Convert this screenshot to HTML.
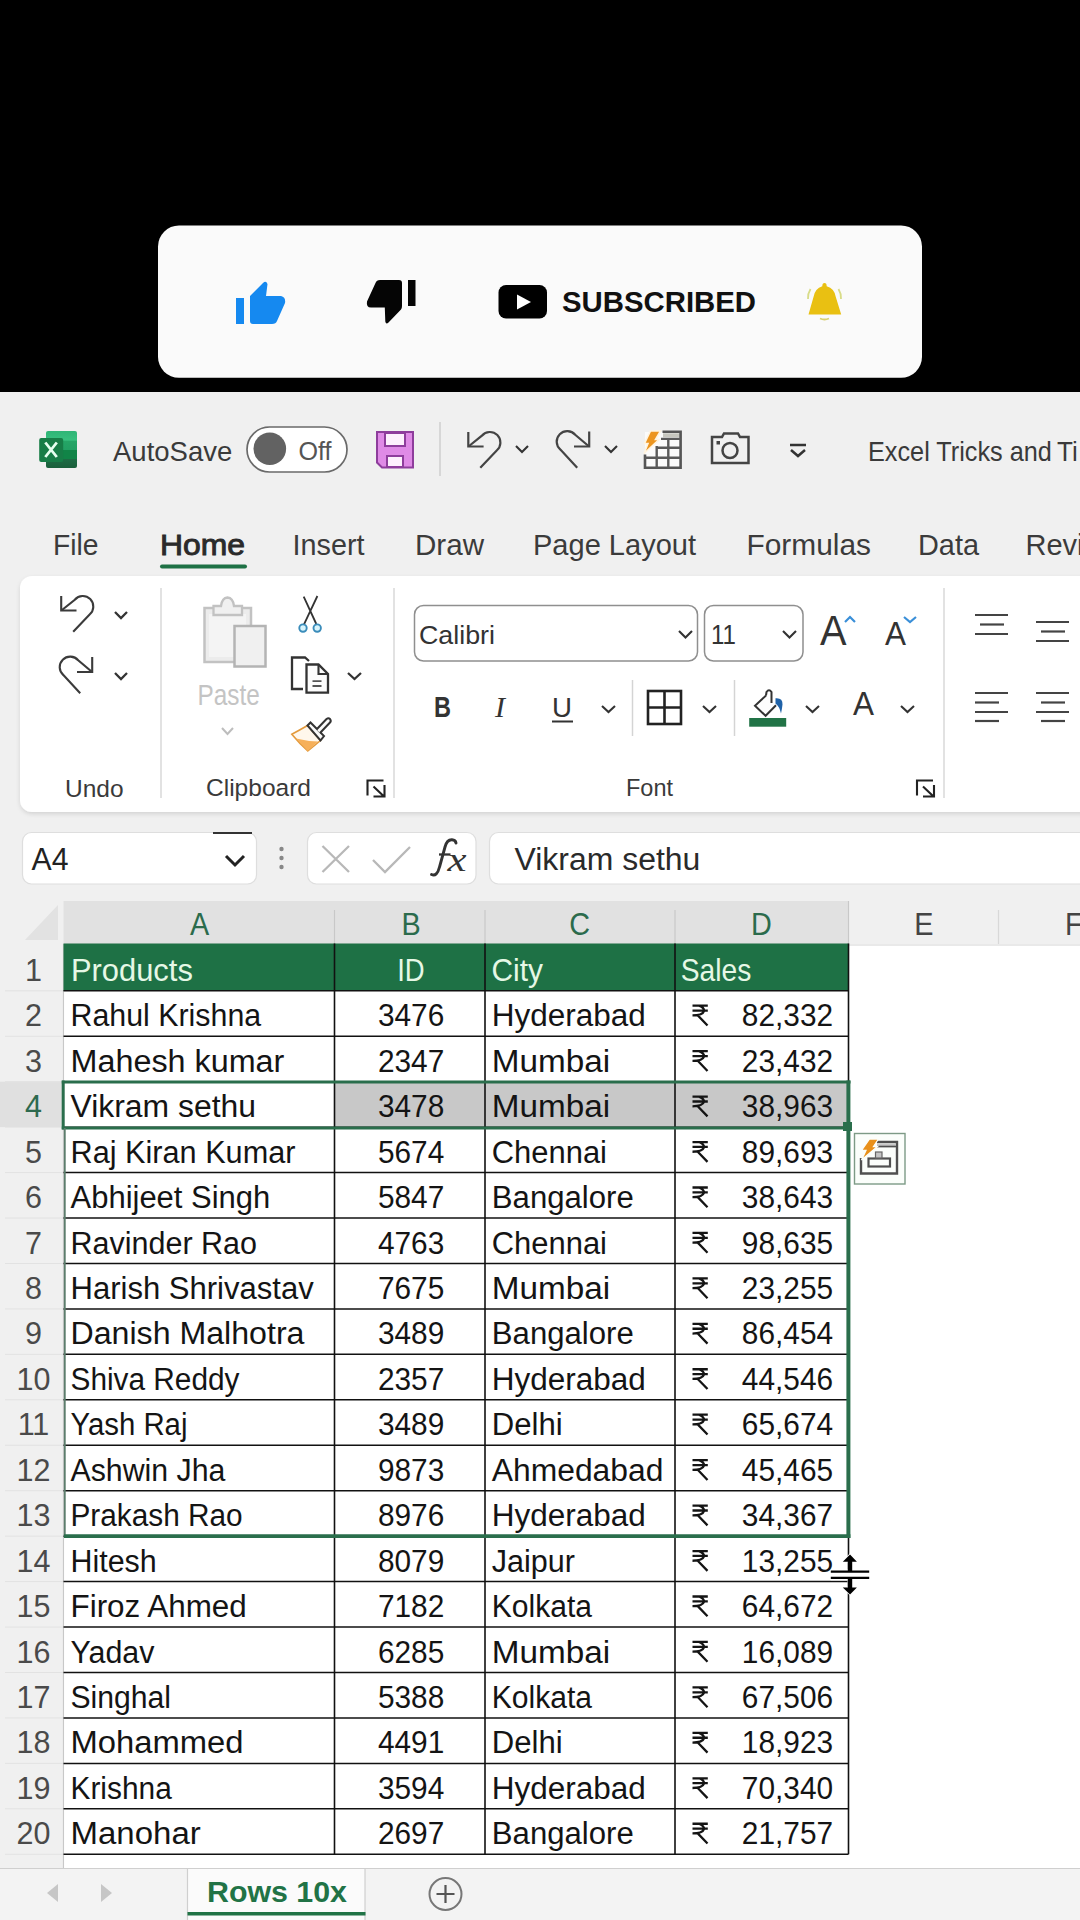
<!DOCTYPE html>
<html><head><meta charset="utf-8"><title>Excel</title>
<style>
html,body{margin:0;padding:0;width:1080px;height:1920px;overflow:hidden;background:#000;}
svg{position:absolute;left:0;top:0;display:block;}
text{font-family:"Liberation Sans", sans-serif;white-space:pre;}
</style></head><body>
<svg width="1080" height="1920" viewBox="0 0 1080 1920">
<rect x="0" y="0" width="1080" height="392" fill="#000"/>
<rect x="158" y="225.5" width="764" height="152.3" fill="#fafafa" rx="21"/>
<rect x="236" y="298" width="8" height="26" fill="#1589f0"/>
<path d="M250,296 L263,283 Q266,280 267.5,284 L266,296 L281,296 Q286,297 285,303 L277,321 Q276,324 272,324 L253,324 Q250,324 250,321 Z" fill="#1589f0" stroke="none" stroke-width="1"/>
<rect x="408" y="280" width="7.5" height="26" fill="#050505"/>
<path d="M402,283 Q402,280 399,280 L380,280 Q376.5,280 375.5,283 L367,301.5 Q366,307.5 371,307.5 L384.8,307.5 L385.3,321.5 Q386,325 388.5,322.5 L401,309.5 Q402,308.5 402,306 Z" fill="#050505" stroke="none" stroke-width="1"/>
<rect x="498.5" y="285" width="48.5" height="33.5" fill="#000" rx="7.5"/>
<path d="M517,294.5 L531,302 L517,309.5 Z" fill="#fff" stroke="none" stroke-width="1"/>
<text x="562" y="312" font-size="29" fill="#111" font-weight="bold" textLength="194" lengthAdjust="spacingAndGlyphs">SUBSCRIBED</text>
<path d="M824.5,283 Q826.7,283 826.7,286.3 Q834.5,288.5 835.8,297 L841.2,314.5 L808.5,314.5 L813.5,297 Q815,288.5 822.3,286.3 Q822.3,283 824.5,283 Z" fill="#e9c012" stroke="none" stroke-width="1"/>
<path d="M820,318.5 Q824.5,320.5 829,318.5" fill="none" stroke="#d9d070" stroke-width="1.8"/>
<path d="M810.5,289 Q807.5,294 808,299" fill="none" stroke="#d8dc88" stroke-width="1.8"/>
<path d="M838.5,289 Q841.5,294 841,299" fill="none" stroke="#d8dc88" stroke-width="1.8"/>
<rect x="0" y="392" width="1080" height="1528" fill="#f0f0f0"/>
<defs><linearGradient id="xg" x1="0" y1="0" x2="0" y2="1"><stop offset="0" stop-color="#2fb576"/><stop offset="0.25" stop-color="#38c07f"/><stop offset="0.27" stop-color="#25a566"/><stop offset="0.5" stop-color="#22a063"/><stop offset="0.52" stop-color="#118447"/><stop offset="0.75" stop-color="#118447"/><stop offset="0.77" stop-color="#1d6b44"/><stop offset="1" stop-color="#1a5f3b"/></linearGradient><filter id="sh" x="-5%" y="-5%" width="110%" height="120%"><feDropShadow dx="0" dy="2" stdDeviation="2" flood-color="#000" flood-opacity="0.12"/></filter></defs>
<rect x="46" y="431" width="31" height="37" fill="url(#xg)" rx="2"/>
<rect x="39.2" y="438" width="24" height="24" fill="#177d47" rx="2"/>
<path d="M45.3,442.5 L56.8,457 M56.8,442.5 L45.3,457" fill="none" stroke="#e6fff0" stroke-width="2.8"/>
<text x="113.00" y="461.00" font-size="27.5" fill="#3a3a3a" textLength="119.27" lengthAdjust="spacingAndGlyphs">AutoSave</text>
<rect x="247" y="427" width="100" height="45" fill="#ffffff" rx="22.5" stroke="#6a6a6a" stroke-width="1.7"/>
<circle cx="269.8" cy="448.8" r="16.3" fill="#626262"/>
<text x="298.50" y="459.50" font-size="25.5" fill="#555" textLength="33.04" lengthAdjust="spacingAndGlyphs">Off</text>
<path d="M377,432 L413,432 L413,467.5 L382,467.5 L377,462.5 Z" fill="#df8ae6" stroke="#8e3d9c" stroke-width="2"/>
<rect x="385" y="433" width="20" height="13" fill="#fdf0fd" stroke="#8e3d9c" stroke-width="2"/>
<rect x="387" y="456" width="16" height="11" fill="#fdf0fd" stroke="#8e3d9c" stroke-width="2"/>
<line x1="440" y1="422" x2="440" y2="476" stroke="#cfcfcf" stroke-width="1.5"/>
<g transform="translate(407.1,-164)">
<path d="M61.2,596 L61.2,610.5 L76.5,610.5" fill="none" stroke="#444" stroke-width="2.2"/>
<path d="M62,610 L74.8,599.7 A10.5,10.5 0 1 1 89.6,614.5 L73.2,631.8" fill="none" stroke="#444" stroke-width="2.2"/>
</g>
<path d="M516,446 L522,452 L528,446" fill="none" stroke="#333" stroke-width="2.1"/>
<g transform="translate(497,-225.5)">
<path d="M92.2,657 L92.2,672 L77,672" fill="none" stroke="#444" stroke-width="2.2"/>
<path d="M91.5,671.5 L78.2,660.3 A10.5,10.5 0 1 0 63.4,675.1 L80.2,693.3" fill="none" stroke="#444" stroke-width="2.2"/>
</g>
<path d="M605,446 L611,452 L617,446" fill="none" stroke="#333" stroke-width="2.1"/>
<rect x="645" y="432" width="36" height="36" fill="#fbfbfb"/>
<rect x="663" y="433.3" width="17" height="4" fill="#c6c6be"/>
<path d="M662.5,431.8 L680.6,431.8 L680.6,467.8 L645,467.8 L645,454.5" fill="none" stroke="#555" stroke-width="2.6"/>
<path d="M661,438.9 L680.6,438.9 M656,447.8 L680.6,447.8 M645,457.8 L680.6,457.8 M656.7,446 L656.7,467.8 M668.3,438.9 L668.3,467.8" fill="none" stroke="#5a5a5a" stroke-width="2.4"/>
<path d="M650.5,431 L660.5,431 L655.5,439.5 L659,439.5 L644,453.5 L648,443.5 L644.5,443.5 Z" fill="#ec9520" stroke="#fff4e0" stroke-width="1.6"/>
<path d="M712,437 L722,437 L724,433.5 L738,433.5 L740,437 L748.5,437 L748.5,463 L712,463 Z" fill="none" stroke="#444" stroke-width="2.5"/>
<circle cx="730" cy="450.5" r="7.5" fill="none" stroke="#444" stroke-width="2.5"/>
<rect x="716.5" y="441" width="3.5" height="3.5" fill="#444"/>
<line x1="790" y1="445" x2="806" y2="445" stroke="#333" stroke-width="2.5"/>
<path d="M791,450 L798,456 L805,450" fill="none" stroke="#333" stroke-width="2.5"/>
<text x="868.00" y="461.00" font-size="28" fill="#3a3a3a" textLength="183.90" lengthAdjust="spacingAndGlyphs">Excel Tricks and</text>
<text x="1057.00" y="461.00" font-size="28" fill="#3a3a3a" textLength="20.74" lengthAdjust="spacingAndGlyphs">Ti</text>
<text x="53" y="555" font-size="29" fill="#3b3b3b" textLength="45.5" lengthAdjust="spacingAndGlyphs">File</text>
<text x="292.5" y="555" font-size="29" fill="#3b3b3b" textLength="72" lengthAdjust="spacingAndGlyphs">Insert</text>
<text x="415" y="555" font-size="29" fill="#3b3b3b" textLength="69" lengthAdjust="spacingAndGlyphs">Draw</text>
<text x="533" y="555" font-size="29" fill="#3b3b3b" textLength="163" lengthAdjust="spacingAndGlyphs">Page Layout</text>
<text x="746.5" y="555" font-size="29" fill="#3b3b3b" textLength="124.5" lengthAdjust="spacingAndGlyphs">Formulas</text>
<text x="918" y="555" font-size="29" fill="#3b3b3b" textLength="61" lengthAdjust="spacingAndGlyphs">Data</text>
<text x="1025.5" y="555" font-size="29" fill="#3b3b3b">Review</text>
<text x="160" y="555" font-size="29" fill="#2a2a2a" textLength="85" lengthAdjust="spacingAndGlyphs" stroke="#2a2a2a" stroke-width="0.9">Home</text>
<rect x="160" y="564.5" width="87" height="4" fill="#1e7145" rx="2"/>
<rect x="20" y="576" width="1100" height="236" fill="#ffffff" rx="12" filter="url(#sh)"/>
<line x1="161" y1="588" x2="161" y2="798" stroke="#d9d9d9" stroke-width="1.5"/>
<line x1="394" y1="588" x2="394" y2="798" stroke="#d9d9d9" stroke-width="1.5"/>
<line x1="944" y1="588" x2="944" y2="798" stroke="#d9d9d9" stroke-width="1.5"/>
<path d="M61.2,596 L61.2,610.5 L76.5,610.5" fill="none" stroke="#3b3b3b" stroke-width="2.1"/>
<path d="M62,610 L74.8,599.7 A10.5,10.5 0 1 1 89.6,614.5 L73.2,631.8" fill="none" stroke="#3b3b3b" stroke-width="2.1"/>
<path d="M115,612 L121,618 L127,612" fill="none" stroke="#333" stroke-width="2.3"/>
<path d="M92.2,657 L92.2,672 L77,672" fill="none" stroke="#3b3b3b" stroke-width="2.1"/>
<path d="M91.5,671.5 L78.2,660.3 A10.5,10.5 0 1 0 63.4,675.1 L80.2,693.3" fill="none" stroke="#3b3b3b" stroke-width="2.1"/>
<path d="M115,673 L121,679 L127,673" fill="none" stroke="#333" stroke-width="2.3"/>
<text x="65" y="797" font-size="24.5" fill="#3a3a3a">Undo</text>
<path d="M204.5,608 L251,608 L251,662 L204.5,662 Z" fill="#ececec" stroke="#c2c2c2" stroke-width="2.5"/>
<rect x="209" y="614" width="37" height="43" fill="#f4f4f4"/>
<path d="M213.5,615 L213.5,606 L221,606 Q222,598 227.5,597.5 Q233,598 234,606 L242,606 L242,615 Z" fill="#f0f0f0" stroke="#c2c2c2" stroke-width="2.3"/>
<rect x="234.5" y="626" width="31" height="40.5" fill="#f0f0f0" stroke="#b4b4b4" stroke-width="2.5"/>
<text x="197.50" y="705.00" font-size="30" fill="#c4c4c4" textLength="62.27" lengthAdjust="spacingAndGlyphs">Paste</text>
<path d="M222,728 L227.5,734 L233,728" fill="none" stroke="#bdbdbd" stroke-width="2"/>
<path d="M303.7,596.7 L316.3,624 M317.4,596 L304,624.3" fill="none" stroke="#333" stroke-width="1.8"/>
<circle cx="303" cy="628.1" r="3.7" fill="#d8f4fc" stroke="#3a8cba" stroke-width="1.9"/>
<circle cx="317.2" cy="628.1" r="3.7" fill="#d8f4fc" stroke="#3a8cba" stroke-width="1.9"/>
<path d="M303,689 L292,689 L292,657.5 L305,657.5 L309,661" fill="none" stroke="#333" stroke-width="2.3"/>
<path d="M306.5,664.5 L318.5,664.5 L328,674 L328,692.7 L306.5,692.7 Z" fill="#fcfcfc" stroke="#333" stroke-width="2.3"/>
<path d="M318.5,664.5 L318.5,674 L328,674" fill="none" stroke="#333" stroke-width="2.1"/>
<path d="M312.5,681.2 L321.5,681.2 M312.5,686 L321.5,686" fill="none" stroke="#555" stroke-width="1.8"/>
<path d="M348,673 L354.5,679 L361,673" fill="none" stroke="#333" stroke-width="2.3"/>
<path d="M307.5,725.5 Q298,731 291.8,734.2 Q300,744 307.8,751 Q314,746 320.5,740.5 Z" fill="#fff7ec" stroke="#e39a3c" stroke-width="1.6"/>
<path d="M296,738.5 Q306,741 318,741.5 L307.8,751 Z" fill="#f6b05a" stroke="none" stroke-width="1"/>
<path d="M307.5,725.5 L310.5,722.5 L324,736 L320.5,740.5 Z" fill="#fafafa" stroke="#333" stroke-width="2"/>
<path d="M316.5,729.5 L326.5,719 Q328.5,717.5 330,719 Q331.5,721 330,722.5 L320,733" fill="#fafafa" stroke="#333" stroke-width="2"/>
<text x="206" y="796" font-size="24.5" fill="#3a3a3a" textLength="105" lengthAdjust="spacingAndGlyphs">Clipboard</text>
<path d="M383.5,780.5 L367.5,780.5 L367.5,795.5" fill="none" stroke="#222" stroke-width="2.1"/>
<path d="M373.5,786.5 L383.5,796.0 M373.5,796.5 L384.5,796.5 L384.5,785.0" fill="none" stroke="#222" stroke-width="2.1"/>
<path d="M933,780.5 L917,780.5 L917,795.5" fill="none" stroke="#222" stroke-width="2.1"/>
<path d="M923,786.5 L933,796.0 M923,796.5 L934,796.5 L934,785.0" fill="none" stroke="#222" stroke-width="2.1"/>
<rect x="414.5" y="605.5" width="283" height="55.5" fill="#fff" rx="9" stroke="#8f8f8f" stroke-width="1.5"/>
<text x="419" y="644" font-size="26.7" fill="#333" textLength="76" lengthAdjust="spacingAndGlyphs">Calibri</text>
<path d="M679,631 L685.5,637.5 L692,631" fill="none" stroke="#333" stroke-width="2.1"/>
<rect x="704.5" y="605.5" width="98.5" height="55.5" fill="#fff" rx="9" stroke="#8f8f8f" stroke-width="1.5"/>
<text x="711" y="644" font-size="28" fill="#333" textLength="25" lengthAdjust="spacingAndGlyphs">11</text>
<path d="M783,631 L789.5,637.5 L796,631" fill="none" stroke="#333" stroke-width="2.1"/>
<text x="820" y="645" font-size="42" fill="#333" textLength="26.5" lengthAdjust="spacingAndGlyphs">A</text>
<path d="M845,622 L850,617 L855,622" fill="none" stroke="#3a8fd8" stroke-width="2.2"/>
<text x="885" y="645" font-size="34" fill="#333" textLength="21" lengthAdjust="spacingAndGlyphs">A</text>
<path d="M904,617 L910,622 L916,617" fill="none" stroke="#3a8fd8" stroke-width="2.2"/>
<text x="434" y="717" font-size="30" fill="#333" font-weight="bold" textLength="17" lengthAdjust="spacingAndGlyphs">B</text>
<text x="495" y="717" font-size="30" fill="#333" style="font-family:Liberation Serif;font-style:italic">I</text>
<text x="552" y="717" font-size="28" fill="#333" textLength="20" lengthAdjust="spacingAndGlyphs">U</text>
<line x1="552" y1="721.5" x2="573" y2="721.5" stroke="#333" stroke-width="2"/>
<path d="M602,706 L608.5,712 L615,706" fill="none" stroke="#333" stroke-width="2.1"/>
<line x1="632.5" y1="680" x2="632.5" y2="736" stroke="#d4d4d4" stroke-width="1.5"/>
<rect x="648" y="691" width="33" height="33" fill="none" stroke="#222" stroke-width="2.6"/>
<path d="M664.5,691 L664.5,724 M648,707.5 L681,707.5" fill="none" stroke="#222" stroke-width="2.6"/>
<path d="M703,706 L709.5,712 L716,706" fill="none" stroke="#333" stroke-width="2.1"/>
<line x1="734.5" y1="680" x2="734.5" y2="736" stroke="#d4d4d4" stroke-width="1.5"/>
<path d="M766,695.5 L755,705.8 L765.6,715.8 L776,705.2" fill="#fdfdfd" stroke="#333" stroke-width="2"/>
<path d="M766,695.5 L766.5,692 Q769,688.5 771.5,692 L771.5,703" fill="none" stroke="#333" stroke-width="2"/>
<path d="M775.5,698.2 Q782.8,697.5 782.5,704.5 Q782,709 781,713.5 Q779.5,706.5 775.5,703.5 Z" fill="#1f62a8" stroke="none" stroke-width="1"/>
<rect x="749.2" y="718" width="37" height="8.7" fill="#217346"/>
<path d="M806,706 L812.5,712 L819,706" fill="none" stroke="#333" stroke-width="2.1"/>
<text x="853" y="715" font-size="34" fill="#333" textLength="21" lengthAdjust="spacingAndGlyphs">A</text>
<path d="M901,706 L907.5,712 L914,706" fill="none" stroke="#333" stroke-width="2.1"/>
<text x="626" y="796" font-size="24.5" fill="#3a3a3a" textLength="47" lengthAdjust="spacingAndGlyphs">Font</text>
<line x1="975" y1="615" x2="1008" y2="615" stroke="#444" stroke-width="2.2"/>
<line x1="980" y1="624.5" x2="1004" y2="624.5" stroke="#444" stroke-width="2.2"/>
<line x1="975" y1="634" x2="1008" y2="634" stroke="#444" stroke-width="2.2"/>
<line x1="1036" y1="622" x2="1069" y2="622" stroke="#444" stroke-width="2.2"/>
<line x1="1041" y1="631.5" x2="1065" y2="631.5" stroke="#444" stroke-width="2.2"/>
<line x1="1036" y1="641" x2="1069" y2="641" stroke="#444" stroke-width="2.2"/>
<line x1="975" y1="693" x2="1008" y2="693" stroke="#444" stroke-width="2.2"/>
<line x1="975" y1="702.5" x2="999" y2="702.5" stroke="#444" stroke-width="2.2"/>
<line x1="975" y1="712" x2="1008" y2="712" stroke="#444" stroke-width="2.2"/>
<line x1="975" y1="721" x2="999" y2="721" stroke="#444" stroke-width="2.2"/>
<line x1="1036" y1="693" x2="1069" y2="693" stroke="#444" stroke-width="2.2"/>
<line x1="1041" y1="702.5" x2="1065" y2="702.5" stroke="#444" stroke-width="2.2"/>
<line x1="1036" y1="712" x2="1069" y2="712" stroke="#444" stroke-width="2.2"/>
<line x1="1041" y1="721" x2="1065" y2="721" stroke="#444" stroke-width="2.2"/>
<rect x="22.5" y="832.5" width="234" height="51.5" fill="#fff" rx="9" stroke="#dedede" stroke-width="1.2"/>
<line x1="213" y1="833" x2="252" y2="833" stroke="#333" stroke-width="2"/>
<text x="31.50" y="870.00" font-size="31" fill="#222" textLength="36.91" lengthAdjust="spacingAndGlyphs">A4</text>
<path d="M226,856 L235,865 L244,856" fill="none" stroke="#222" stroke-width="3"/>
<circle cx="281.5" cy="849" r="2.2" fill="#888"/>
<circle cx="281.5" cy="858" r="2.2" fill="#888"/>
<circle cx="281.5" cy="867" r="2.2" fill="#888"/>
<rect x="307.5" y="832.5" width="168.5" height="51.5" fill="#fff" rx="9" stroke="#dedede" stroke-width="1.2"/>
<path d="M322.5,846 L349,872 M349,846 L322.5,872" fill="none" stroke="#b8b8b8" stroke-width="2.3"/>
<path d="M373,860 L385,872 L410,847" fill="none" stroke="#b8b8b8" stroke-width="2.3"/>
<path d="M431.5,874.5 Q437,877 439.5,867 L445,847 Q447,839.5 452,839.8 Q455.5,840 456,843" fill="none" stroke="#333" stroke-width="2.9" stroke-linecap="round"/>
<path d="M439,854.5 L450.5,854.5" fill="none" stroke="#333" stroke-width="2.3"/>
<text x="447.5" y="871" font-size="34" fill="#333" textLength="19" lengthAdjust="spacingAndGlyphs" style="font-family:Liberation Serif;font-style:italic">x</text>
<rect x="489.5" y="832.5" width="620" height="51.5" fill="#fff" rx="9" stroke="#dedede" stroke-width="1.2"/>
<text x="514.50" y="869.50" font-size="31" fill="#2a2a2a" textLength="185.82" lengthAdjust="spacingAndGlyphs">Vikram sethu</text>
<rect x="0" y="901" width="1080" height="43" fill="#f0f0f0"/>
<rect x="63.5" y="901" width="785.0" height="43" fill="#e1e1e1"/>
<path d="M25,940 L58,940 L58,905 Z" fill="#e2e2e2" stroke="none" stroke-width="1"/>
<line x1="334.5" y1="910" x2="334.5" y2="944" stroke="#c8c8c8" stroke-width="1.2"/>
<line x1="485" y1="910" x2="485" y2="944" stroke="#c8c8c8" stroke-width="1.2"/>
<line x1="675" y1="910" x2="675" y2="944" stroke="#c8c8c8" stroke-width="1.2"/>
<line x1="848.5" y1="901" x2="848.5" y2="944" stroke="#c8c8c8" stroke-width="1.2"/>
<line x1="998.5" y1="910" x2="998.5" y2="944" stroke="#d8d8d8" stroke-width="1.2"/>
<text x="189.94" y="935.20" font-size="31.3" fill="#2b6b4c" textLength="19.21" lengthAdjust="spacingAndGlyphs">A</text>
<text x="401.54" y="935.20" font-size="31.3" fill="#2b6b4c" textLength="19.21" lengthAdjust="spacingAndGlyphs">B</text>
<text x="569.32" y="935.20" font-size="31.3" fill="#2b6b4c" textLength="20.80" lengthAdjust="spacingAndGlyphs">C</text>
<text x="750.92" y="935.20" font-size="31.3" fill="#2b6b4c" textLength="20.80" lengthAdjust="spacingAndGlyphs">D</text>
<text x="914.34" y="935.20" font-size="31.3" fill="#444" textLength="19.21" lengthAdjust="spacingAndGlyphs">E</text>
<text x="1065.00" y="935.20" font-size="31.3" fill="#444" textLength="17.60" lengthAdjust="spacingAndGlyphs">F</text>
<rect x="0" y="944" width="63.5" height="911" fill="#f0f0f0"/>
<rect x="0" y="1081.691" width="63.5" height="45.447" fill="#e0e0e0"/>
<line x1="5" y1="990.797" x2="63.5" y2="990.797" stroke="#e2e2e2" stroke-width="1"/>
<line x1="5" y1="1036.2440000000001" x2="63.5" y2="1036.2440000000001" stroke="#e2e2e2" stroke-width="1"/>
<line x1="5" y1="1081.691" x2="63.5" y2="1081.691" stroke="#e2e2e2" stroke-width="1"/>
<line x1="5" y1="1127.138" x2="63.5" y2="1127.138" stroke="#e2e2e2" stroke-width="1"/>
<line x1="5" y1="1172.585" x2="63.5" y2="1172.585" stroke="#e2e2e2" stroke-width="1"/>
<line x1="5" y1="1218.0320000000002" x2="63.5" y2="1218.0320000000002" stroke="#e2e2e2" stroke-width="1"/>
<line x1="5" y1="1263.479" x2="63.5" y2="1263.479" stroke="#e2e2e2" stroke-width="1"/>
<line x1="5" y1="1308.926" x2="63.5" y2="1308.926" stroke="#e2e2e2" stroke-width="1"/>
<line x1="5" y1="1354.373" x2="63.5" y2="1354.373" stroke="#e2e2e2" stroke-width="1"/>
<line x1="5" y1="1399.8200000000002" x2="63.5" y2="1399.8200000000002" stroke="#e2e2e2" stroke-width="1"/>
<line x1="5" y1="1445.267" x2="63.5" y2="1445.267" stroke="#e2e2e2" stroke-width="1"/>
<line x1="5" y1="1490.714" x2="63.5" y2="1490.714" stroke="#e2e2e2" stroke-width="1"/>
<line x1="5" y1="1536.161" x2="63.5" y2="1536.161" stroke="#e2e2e2" stroke-width="1"/>
<line x1="5" y1="1581.6080000000002" x2="63.5" y2="1581.6080000000002" stroke="#e2e2e2" stroke-width="1"/>
<line x1="5" y1="1627.055" x2="63.5" y2="1627.055" stroke="#e2e2e2" stroke-width="1"/>
<line x1="5" y1="1672.502" x2="63.5" y2="1672.502" stroke="#e2e2e2" stroke-width="1"/>
<line x1="5" y1="1717.949" x2="63.5" y2="1717.949" stroke="#e2e2e2" stroke-width="1"/>
<line x1="5" y1="1763.3960000000002" x2="63.5" y2="1763.3960000000002" stroke="#e2e2e2" stroke-width="1"/>
<line x1="5" y1="1808.843" x2="63.5" y2="1808.843" stroke="#e2e2e2" stroke-width="1"/>
<line x1="5" y1="1854.29" x2="63.5" y2="1854.29" stroke="#e2e2e2" stroke-width="1"/>
<line x1="63.5" y1="944" x2="63.5" y2="1868" stroke="#c8c8c8" stroke-width="1.2"/>
<rect x="64.1" y="944" width="1016.5" height="924" fill="#ffffff"/>
<line x1="848.5" y1="945" x2="1080" y2="945" stroke="#d4d4d4" stroke-width="1.2"/>
<rect x="63.5" y="943.5" width="785.0" height="47.297000000000025" fill="#1e7145"/>
<rect x="334.5" y="1081.691" width="514.0" height="45.447" fill="#c8c8c8"/>
<line x1="63.5" y1="990.797" x2="848.5" y2="990.797" stroke="#111" stroke-width="1.5"/>
<line x1="63.5" y1="1036.2440000000001" x2="848.5" y2="1036.2440000000001" stroke="#111" stroke-width="1.5"/>
<line x1="63.5" y1="1081.691" x2="848.5" y2="1081.691" stroke="#111" stroke-width="1.5"/>
<line x1="63.5" y1="1127.138" x2="848.5" y2="1127.138" stroke="#111" stroke-width="1.5"/>
<line x1="63.5" y1="1172.585" x2="848.5" y2="1172.585" stroke="#111" stroke-width="1.5"/>
<line x1="63.5" y1="1218.0320000000002" x2="848.5" y2="1218.0320000000002" stroke="#111" stroke-width="1.5"/>
<line x1="63.5" y1="1263.479" x2="848.5" y2="1263.479" stroke="#111" stroke-width="1.5"/>
<line x1="63.5" y1="1308.926" x2="848.5" y2="1308.926" stroke="#111" stroke-width="1.5"/>
<line x1="63.5" y1="1354.373" x2="848.5" y2="1354.373" stroke="#111" stroke-width="1.5"/>
<line x1="63.5" y1="1399.8200000000002" x2="848.5" y2="1399.8200000000002" stroke="#111" stroke-width="1.5"/>
<line x1="63.5" y1="1445.267" x2="848.5" y2="1445.267" stroke="#111" stroke-width="1.5"/>
<line x1="63.5" y1="1490.714" x2="848.5" y2="1490.714" stroke="#111" stroke-width="1.5"/>
<line x1="63.5" y1="1536.161" x2="848.5" y2="1536.161" stroke="#111" stroke-width="1.5"/>
<line x1="63.5" y1="1581.6080000000002" x2="848.5" y2="1581.6080000000002" stroke="#111" stroke-width="1.5"/>
<line x1="63.5" y1="1627.055" x2="848.5" y2="1627.055" stroke="#111" stroke-width="1.5"/>
<line x1="63.5" y1="1672.502" x2="848.5" y2="1672.502" stroke="#111" stroke-width="1.5"/>
<line x1="63.5" y1="1717.949" x2="848.5" y2="1717.949" stroke="#111" stroke-width="1.5"/>
<line x1="63.5" y1="1763.3960000000002" x2="848.5" y2="1763.3960000000002" stroke="#111" stroke-width="1.5"/>
<line x1="63.5" y1="1808.843" x2="848.5" y2="1808.843" stroke="#111" stroke-width="1.5"/>
<line x1="63.5" y1="1854.29" x2="848.5" y2="1854.29" stroke="#111" stroke-width="1.5"/>
<line x1="334.5" y1="943.5" x2="334.5" y2="1854.29" stroke="#111" stroke-width="1.6"/>
<line x1="485" y1="943.5" x2="485" y2="1854.29" stroke="#111" stroke-width="1.6"/>
<line x1="675" y1="943.5" x2="675" y2="1854.29" stroke="#111" stroke-width="1.6"/>
<line x1="848.5" y1="943.5" x2="848.5" y2="1854.29" stroke="#111" stroke-width="1.6"/>
<line x1="61.8" y1="1082" x2="850.5" y2="1082" stroke="#2a6e4c" stroke-width="2.8"/>
<line x1="61.8" y1="1128" x2="850.5" y2="1128" stroke="#2a6e4c" stroke-width="2.8"/>
<line x1="63.2" y1="1080.6" x2="63.2" y2="1129.4" stroke="#2a6e4c" stroke-width="3"/>
<line x1="64.8" y1="1128" x2="64.8" y2="1537" stroke="#5c7d6c" stroke-width="1.8"/>
<line x1="848.4" y1="1080.6" x2="848.4" y2="1538" stroke="#2a6e4c" stroke-width="4"/>
<line x1="63.9" y1="1536.2" x2="850.4" y2="1536.2" stroke="#2a6e4c" stroke-width="3.7"/>
<rect x="843" y="1122" width="9" height="9" fill="#2a6e4c"/>
<rect x="854.5" y="1133.5" width="50.5" height="50.5" fill="#fbfefb" stroke="#7d9a86" stroke-width="1.4"/>
<path d="M861,1158 L861,1173.5 L897,1173.5 L897,1142 L877,1142" fill="none" stroke="#505050" stroke-width="2.4"/>
<rect x="877" y="1143.8" width="19" height="3.6" fill="#c8c8c8"/>
<line x1="877" y1="1146.5" x2="897" y2="1146.5" stroke="#505050" stroke-width="1.6"/>
<rect x="868.5" y="1158.5" width="21.5" height="8" fill="none" stroke="#505050" stroke-width="2.2"/>
<rect x="875.5" y="1152" width="6.5" height="6" fill="#c4c4c4" stroke="#666" stroke-width="1.2"/>
<path d="M869.5,1139 L878.5,1139 L873.5,1146.5 L877.5,1146.5 L861.5,1160 L866,1150.5 L861.5,1150.5 Z" fill="#e8901a" stroke="#fbfefb" stroke-width="1.3"/>
<text x="33.5" y="980.85" font-size="30.5" fill="#4a4a4a" text-anchor="middle">1</text>
<text x="33.5" y="1026.297" font-size="30.5" fill="#4a4a4a" text-anchor="middle">2</text>
<text x="33.5" y="1071.7440000000001" font-size="30.5" fill="#4a4a4a" text-anchor="middle">3</text>
<text x="33.5" y="1117.191" font-size="30.5" fill="#2d6a4f" text-anchor="middle">4</text>
<text x="33.5" y="1162.638" font-size="30.5" fill="#4a4a4a" text-anchor="middle">5</text>
<text x="33.5" y="1208.085" font-size="30.5" fill="#4a4a4a" text-anchor="middle">6</text>
<text x="33.5" y="1253.5320000000002" font-size="30.5" fill="#4a4a4a" text-anchor="middle">7</text>
<text x="33.5" y="1298.979" font-size="30.5" fill="#4a4a4a" text-anchor="middle">8</text>
<text x="33.5" y="1344.426" font-size="30.5" fill="#4a4a4a" text-anchor="middle">9</text>
<text x="33.5" y="1389.873" font-size="30.5" fill="#4a4a4a" text-anchor="middle">10</text>
<text x="33.5" y="1435.3200000000002" font-size="30.5" fill="#4a4a4a" text-anchor="middle">11</text>
<text x="33.5" y="1480.767" font-size="30.5" fill="#4a4a4a" text-anchor="middle">12</text>
<text x="33.5" y="1526.214" font-size="30.5" fill="#4a4a4a" text-anchor="middle">13</text>
<text x="33.5" y="1571.661" font-size="30.5" fill="#4a4a4a" text-anchor="middle">14</text>
<text x="33.5" y="1617.1080000000002" font-size="30.5" fill="#4a4a4a" text-anchor="middle">15</text>
<text x="33.5" y="1662.555" font-size="30.5" fill="#4a4a4a" text-anchor="middle">16</text>
<text x="33.5" y="1708.002" font-size="30.5" fill="#4a4a4a" text-anchor="middle">17</text>
<text x="33.5" y="1753.449" font-size="30.5" fill="#4a4a4a" text-anchor="middle">18</text>
<text x="33.5" y="1798.8960000000002" font-size="30.5" fill="#4a4a4a" text-anchor="middle">19</text>
<text x="33.5" y="1844.343" font-size="30.5" fill="#4a4a4a" text-anchor="middle">20</text>
<text x="71.00" y="980.65" font-size="31.3" fill="#e6f8e6" textLength="121.82" lengthAdjust="spacingAndGlyphs">Products</text>
<text x="397.20" y="980.65" font-size="31.3" fill="#e6f8e6" textLength="27.46" lengthAdjust="spacingAndGlyphs">ID</text>
<text x="491.50" y="980.65" font-size="31.3" fill="#e6f8e6" textLength="51.41" lengthAdjust="spacingAndGlyphs">City</text>
<text x="680.70" y="980.65" font-size="31.3" fill="#e6f8e6" textLength="70.57" lengthAdjust="spacingAndGlyphs">Sales</text>
<text x="70.50" y="1026.30" font-size="30.6" fill="#141414" textLength="190.68" lengthAdjust="spacingAndGlyphs">Rahul Krishna</text>
<text x="377.90" y="1026.30" font-size="30.6" fill="#141414" textLength="66.36" lengthAdjust="spacingAndGlyphs">3476</text>
<text x="491.80" y="1026.30" font-size="30.6" fill="#141414" textLength="154.06" lengthAdjust="spacingAndGlyphs">Hyderabad</text>
<path d="M692.5,1005.697 L707.8,1005.697 M692.5,1010.597 L707.8,1010.597 M699,1005.697 Q704.5,1007.797 704,1011.097 Q702.5,1015.397 692.5,1015.397 M697.5,1015.097 L707.5,1025.497" fill="none" stroke="#141414" stroke-width="2.3"/>
<text x="741.85" y="1026.30" font-size="30.6" fill="#141414" textLength="91.24" lengthAdjust="spacingAndGlyphs">82,332</text>
<text x="70.50" y="1071.74" font-size="30.6" fill="#141414" textLength="213.86" lengthAdjust="spacingAndGlyphs">Mahesh kumar</text>
<text x="377.90" y="1071.74" font-size="30.6" fill="#141414" textLength="66.36" lengthAdjust="spacingAndGlyphs">2347</text>
<text x="491.80" y="1071.74" font-size="30.6" fill="#141414" textLength="118.40" lengthAdjust="spacingAndGlyphs">Mumbai</text>
<path d="M692.5,1051.1440000000002 L707.8,1051.1440000000002 M692.5,1056.044 L707.8,1056.044 M699,1051.1440000000002 Q704.5,1053.2440000000001 704,1056.544 Q702.5,1060.844 692.5,1060.844 M697.5,1060.544 L707.5,1070.9440000000002" fill="none" stroke="#141414" stroke-width="2.3"/>
<text x="741.85" y="1071.74" font-size="30.6" fill="#141414" textLength="91.24" lengthAdjust="spacingAndGlyphs">23,432</text>
<text x="70.50" y="1117.19" font-size="30.6" fill="#141414" textLength="185.48" lengthAdjust="spacingAndGlyphs">Vikram sethu</text>
<text x="377.90" y="1117.19" font-size="30.6" fill="#141414" textLength="66.36" lengthAdjust="spacingAndGlyphs">3478</text>
<text x="491.80" y="1117.19" font-size="30.6" fill="#141414" textLength="118.40" lengthAdjust="spacingAndGlyphs">Mumbai</text>
<path d="M692.5,1096.5910000000001 L707.8,1096.5910000000001 M692.5,1101.491 L707.8,1101.491 M699,1096.5910000000001 Q704.5,1098.691 704,1101.991 Q702.5,1106.291 692.5,1106.291 M697.5,1105.991 L707.5,1116.391" fill="none" stroke="#141414" stroke-width="2.3"/>
<text x="741.85" y="1117.19" font-size="30.6" fill="#141414" textLength="91.24" lengthAdjust="spacingAndGlyphs">38,963</text>
<text x="70.50" y="1162.64" font-size="30.6" fill="#141414" textLength="224.94" lengthAdjust="spacingAndGlyphs">Raj Kiran Kumar</text>
<text x="377.90" y="1162.64" font-size="30.6" fill="#141414" textLength="66.36" lengthAdjust="spacingAndGlyphs">5674</text>
<text x="491.80" y="1162.64" font-size="30.6" fill="#141414" textLength="115.17" lengthAdjust="spacingAndGlyphs">Chennai</text>
<path d="M692.5,1142.038 L707.8,1142.038 M692.5,1146.9379999999999 L707.8,1146.9379999999999 M699,1142.038 Q704.5,1144.138 704,1147.4379999999999 Q702.5,1151.7379999999998 692.5,1151.7379999999998 M697.5,1151.4379999999999 L707.5,1161.838" fill="none" stroke="#141414" stroke-width="2.3"/>
<text x="741.85" y="1162.64" font-size="30.6" fill="#141414" textLength="91.24" lengthAdjust="spacingAndGlyphs">89,693</text>
<text x="70.50" y="1208.09" font-size="30.6" fill="#141414" textLength="199.82" lengthAdjust="spacingAndGlyphs">Abhijeet Singh</text>
<text x="377.90" y="1208.09" font-size="30.6" fill="#141414" textLength="66.36" lengthAdjust="spacingAndGlyphs">5847</text>
<text x="491.80" y="1208.09" font-size="30.6" fill="#141414" textLength="141.99" lengthAdjust="spacingAndGlyphs">Bangalore</text>
<path d="M692.5,1187.4850000000001 L707.8,1187.4850000000001 M692.5,1192.385 L707.8,1192.385 M699,1187.4850000000001 Q704.5,1189.585 704,1192.885 Q702.5,1197.185 692.5,1197.185 M697.5,1196.885 L707.5,1207.285" fill="none" stroke="#141414" stroke-width="2.3"/>
<text x="741.85" y="1208.09" font-size="30.6" fill="#141414" textLength="91.24" lengthAdjust="spacingAndGlyphs">38,643</text>
<text x="70.50" y="1253.53" font-size="30.6" fill="#141414" textLength="186.56" lengthAdjust="spacingAndGlyphs">Ravinder Rao</text>
<text x="377.90" y="1253.53" font-size="30.6" fill="#141414" textLength="66.36" lengthAdjust="spacingAndGlyphs">4763</text>
<text x="491.80" y="1253.53" font-size="30.6" fill="#141414" textLength="115.17" lengthAdjust="spacingAndGlyphs">Chennai</text>
<path d="M692.5,1232.9320000000002 L707.8,1232.9320000000002 M692.5,1237.832 L707.8,1237.832 M699,1232.9320000000002 Q704.5,1235.0320000000002 704,1238.332 Q702.5,1242.632 692.5,1242.632 M697.5,1242.332 L707.5,1252.7320000000002" fill="none" stroke="#141414" stroke-width="2.3"/>
<text x="741.85" y="1253.53" font-size="30.6" fill="#141414" textLength="91.24" lengthAdjust="spacingAndGlyphs">98,635</text>
<text x="70.50" y="1298.98" font-size="30.6" fill="#141414" textLength="243.23" lengthAdjust="spacingAndGlyphs">Harish Shrivastav</text>
<text x="377.90" y="1298.98" font-size="30.6" fill="#141414" textLength="66.36" lengthAdjust="spacingAndGlyphs">7675</text>
<text x="491.80" y="1298.98" font-size="30.6" fill="#141414" textLength="118.40" lengthAdjust="spacingAndGlyphs">Mumbai</text>
<path d="M692.5,1278.3790000000001 L707.8,1278.3790000000001 M692.5,1283.279 L707.8,1283.279 M699,1278.3790000000001 Q704.5,1280.479 704,1283.779 Q702.5,1288.079 692.5,1288.079 M697.5,1287.779 L707.5,1298.179" fill="none" stroke="#141414" stroke-width="2.3"/>
<text x="741.85" y="1298.98" font-size="30.6" fill="#141414" textLength="91.24" lengthAdjust="spacingAndGlyphs">23,255</text>
<text x="70.50" y="1344.43" font-size="30.6" fill="#141414" textLength="234.00" lengthAdjust="spacingAndGlyphs">Danish Malhotra</text>
<text x="377.90" y="1344.43" font-size="30.6" fill="#141414" textLength="66.36" lengthAdjust="spacingAndGlyphs">3489</text>
<text x="491.80" y="1344.43" font-size="30.6" fill="#141414" textLength="141.99" lengthAdjust="spacingAndGlyphs">Bangalore</text>
<path d="M692.5,1323.826 L707.8,1323.826 M692.5,1328.7259999999999 L707.8,1328.7259999999999 M699,1323.826 Q704.5,1325.926 704,1329.2259999999999 Q702.5,1333.5259999999998 692.5,1333.5259999999998 M697.5,1333.2259999999999 L707.5,1343.626" fill="none" stroke="#141414" stroke-width="2.3"/>
<text x="741.85" y="1344.43" font-size="30.6" fill="#141414" textLength="91.24" lengthAdjust="spacingAndGlyphs">86,454</text>
<text x="70.50" y="1389.87" font-size="30.6" fill="#141414" textLength="168.98" lengthAdjust="spacingAndGlyphs">Shiva Reddy</text>
<text x="377.90" y="1389.87" font-size="30.6" fill="#141414" textLength="66.36" lengthAdjust="spacingAndGlyphs">2357</text>
<text x="491.80" y="1389.87" font-size="30.6" fill="#141414" textLength="154.06" lengthAdjust="spacingAndGlyphs">Hyderabad</text>
<path d="M692.5,1369.2730000000001 L707.8,1369.2730000000001 M692.5,1374.173 L707.8,1374.173 M699,1369.2730000000001 Q704.5,1371.373 704,1374.673 Q702.5,1378.973 692.5,1378.973 M697.5,1378.673 L707.5,1389.073" fill="none" stroke="#141414" stroke-width="2.3"/>
<text x="741.85" y="1389.87" font-size="30.6" fill="#141414" textLength="91.24" lengthAdjust="spacingAndGlyphs">44,546</text>
<text x="70.50" y="1435.32" font-size="30.6" fill="#141414" textLength="116.98" lengthAdjust="spacingAndGlyphs">Yash Raj</text>
<text x="377.90" y="1435.32" font-size="30.6" fill="#141414" textLength="66.36" lengthAdjust="spacingAndGlyphs">3489</text>
<text x="491.80" y="1435.32" font-size="30.6" fill="#141414" textLength="70.91" lengthAdjust="spacingAndGlyphs">Delhi</text>
<path d="M692.5,1414.7200000000003 L707.8,1414.7200000000003 M692.5,1419.6200000000001 L707.8,1419.6200000000001 M699,1414.7200000000003 Q704.5,1416.8200000000002 704,1420.1200000000001 Q702.5,1424.42 692.5,1424.42 M697.5,1424.1200000000001 L707.5,1434.5200000000002" fill="none" stroke="#141414" stroke-width="2.3"/>
<text x="741.85" y="1435.32" font-size="30.6" fill="#141414" textLength="91.24" lengthAdjust="spacingAndGlyphs">65,674</text>
<text x="70.50" y="1480.77" font-size="30.6" fill="#141414" textLength="154.96" lengthAdjust="spacingAndGlyphs">Ashwin Jha</text>
<text x="377.90" y="1480.77" font-size="30.6" fill="#141414" textLength="66.36" lengthAdjust="spacingAndGlyphs">9873</text>
<text x="491.80" y="1480.77" font-size="30.6" fill="#141414" textLength="171.60" lengthAdjust="spacingAndGlyphs">Ahmedabad</text>
<path d="M692.5,1460.1670000000001 L707.8,1460.1670000000001 M692.5,1465.067 L707.8,1465.067 M699,1460.1670000000001 Q704.5,1462.267 704,1465.567 Q702.5,1469.867 692.5,1469.867 M697.5,1469.567 L707.5,1479.967" fill="none" stroke="#141414" stroke-width="2.3"/>
<text x="741.85" y="1480.77" font-size="30.6" fill="#141414" textLength="91.24" lengthAdjust="spacingAndGlyphs">45,465</text>
<text x="70.50" y="1526.21" font-size="30.6" fill="#141414" textLength="172.16" lengthAdjust="spacingAndGlyphs">Prakash Rao</text>
<text x="377.90" y="1526.21" font-size="30.6" fill="#141414" textLength="66.36" lengthAdjust="spacingAndGlyphs">8976</text>
<text x="491.80" y="1526.21" font-size="30.6" fill="#141414" textLength="154.06" lengthAdjust="spacingAndGlyphs">Hyderabad</text>
<path d="M692.5,1505.614 L707.8,1505.614 M692.5,1510.514 L707.8,1510.514 M699,1505.614 Q704.5,1507.714 704,1511.014 Q702.5,1515.3139999999999 692.5,1515.3139999999999 M697.5,1515.014 L707.5,1525.414" fill="none" stroke="#141414" stroke-width="2.3"/>
<text x="741.85" y="1526.21" font-size="30.6" fill="#141414" textLength="91.24" lengthAdjust="spacingAndGlyphs">34,367</text>
<text x="70.50" y="1571.66" font-size="30.6" fill="#141414" textLength="86.22" lengthAdjust="spacingAndGlyphs">Hitesh</text>
<text x="377.90" y="1571.66" font-size="30.6" fill="#141414" textLength="66.36" lengthAdjust="spacingAndGlyphs">8079</text>
<text x="491.80" y="1571.66" font-size="30.6" fill="#141414" textLength="83.13" lengthAdjust="spacingAndGlyphs">Jaipur</text>
<path d="M692.5,1551.0610000000001 L707.8,1551.0610000000001 M692.5,1555.961 L707.8,1555.961 M699,1551.0610000000001 Q704.5,1553.161 704,1556.461 Q702.5,1560.761 692.5,1560.761 M697.5,1560.461 L707.5,1570.861" fill="none" stroke="#141414" stroke-width="2.3"/>
<text x="741.85" y="1571.66" font-size="30.6" fill="#141414" textLength="91.24" lengthAdjust="spacingAndGlyphs">13,255</text>
<text x="70.50" y="1617.11" font-size="30.6" fill="#141414" textLength="176.23" lengthAdjust="spacingAndGlyphs">Firoz Ahmed</text>
<text x="377.90" y="1617.11" font-size="30.6" fill="#141414" textLength="66.36" lengthAdjust="spacingAndGlyphs">7182</text>
<text x="491.80" y="1617.11" font-size="30.6" fill="#141414" textLength="100.26" lengthAdjust="spacingAndGlyphs">Kolkata</text>
<path d="M692.5,1596.5080000000003 L707.8,1596.5080000000003 M692.5,1601.4080000000001 L707.8,1601.4080000000001 M699,1596.5080000000003 Q704.5,1598.6080000000002 704,1601.9080000000001 Q702.5,1606.208 692.5,1606.208 M697.5,1605.9080000000001 L707.5,1616.3080000000002" fill="none" stroke="#141414" stroke-width="2.3"/>
<text x="741.85" y="1617.11" font-size="30.6" fill="#141414" textLength="91.24" lengthAdjust="spacingAndGlyphs">64,672</text>
<text x="70.50" y="1662.56" font-size="30.6" fill="#141414" textLength="83.99" lengthAdjust="spacingAndGlyphs">Yadav</text>
<text x="377.90" y="1662.56" font-size="30.6" fill="#141414" textLength="66.36" lengthAdjust="spacingAndGlyphs">6285</text>
<text x="491.80" y="1662.56" font-size="30.6" fill="#141414" textLength="118.40" lengthAdjust="spacingAndGlyphs">Mumbai</text>
<path d="M692.5,1641.9550000000002 L707.8,1641.9550000000002 M692.5,1646.855 L707.8,1646.855 M699,1641.9550000000002 Q704.5,1644.055 704,1647.355 Q702.5,1651.655 692.5,1651.655 M697.5,1651.355 L707.5,1661.755" fill="none" stroke="#141414" stroke-width="2.3"/>
<text x="741.85" y="1662.56" font-size="30.6" fill="#141414" textLength="91.24" lengthAdjust="spacingAndGlyphs">16,089</text>
<text x="70.50" y="1708.00" font-size="30.6" fill="#141414" textLength="100.56" lengthAdjust="spacingAndGlyphs">Singhal</text>
<text x="377.90" y="1708.00" font-size="30.6" fill="#141414" textLength="66.36" lengthAdjust="spacingAndGlyphs">5388</text>
<text x="491.80" y="1708.00" font-size="30.6" fill="#141414" textLength="100.26" lengthAdjust="spacingAndGlyphs">Kolkata</text>
<path d="M692.5,1687.402 L707.8,1687.402 M692.5,1692.302 L707.8,1692.302 M699,1687.402 Q704.5,1689.502 704,1692.802 Q702.5,1697.1019999999999 692.5,1697.1019999999999 M697.5,1696.802 L707.5,1707.202" fill="none" stroke="#141414" stroke-width="2.3"/>
<text x="741.85" y="1708.00" font-size="30.6" fill="#141414" textLength="91.24" lengthAdjust="spacingAndGlyphs">67,506</text>
<text x="70.50" y="1753.45" font-size="30.6" fill="#141414" textLength="173.00" lengthAdjust="spacingAndGlyphs">Mohammed</text>
<text x="377.90" y="1753.45" font-size="30.6" fill="#141414" textLength="66.36" lengthAdjust="spacingAndGlyphs">4491</text>
<text x="491.80" y="1753.45" font-size="30.6" fill="#141414" textLength="70.91" lengthAdjust="spacingAndGlyphs">Delhi</text>
<path d="M692.5,1732.8490000000002 L707.8,1732.8490000000002 M692.5,1737.749 L707.8,1737.749 M699,1732.8490000000002 Q704.5,1734.949 704,1738.249 Q702.5,1742.549 692.5,1742.549 M697.5,1742.249 L707.5,1752.6490000000001" fill="none" stroke="#141414" stroke-width="2.3"/>
<text x="741.85" y="1753.45" font-size="30.6" fill="#141414" textLength="91.24" lengthAdjust="spacingAndGlyphs">18,923</text>
<text x="70.50" y="1798.90" font-size="30.6" fill="#141414" textLength="101.26" lengthAdjust="spacingAndGlyphs">Krishna</text>
<text x="377.90" y="1798.90" font-size="30.6" fill="#141414" textLength="66.36" lengthAdjust="spacingAndGlyphs">3594</text>
<text x="491.80" y="1798.90" font-size="30.6" fill="#141414" textLength="154.06" lengthAdjust="spacingAndGlyphs">Hyderabad</text>
<path d="M692.5,1778.2960000000003 L707.8,1778.2960000000003 M692.5,1783.1960000000001 L707.8,1783.1960000000001 M699,1778.2960000000003 Q704.5,1780.3960000000002 704,1783.6960000000001 Q702.5,1787.996 692.5,1787.996 M697.5,1787.6960000000001 L707.5,1798.0960000000002" fill="none" stroke="#141414" stroke-width="2.3"/>
<text x="741.85" y="1798.90" font-size="30.6" fill="#141414" textLength="91.24" lengthAdjust="spacingAndGlyphs">70,340</text>
<text x="70.50" y="1844.34" font-size="30.6" fill="#141414" textLength="130.23" lengthAdjust="spacingAndGlyphs">Manohar</text>
<text x="377.90" y="1844.34" font-size="30.6" fill="#141414" textLength="66.36" lengthAdjust="spacingAndGlyphs">2697</text>
<text x="491.80" y="1844.34" font-size="30.6" fill="#141414" textLength="141.99" lengthAdjust="spacingAndGlyphs">Bangalore</text>
<path d="M692.5,1823.7430000000002 L707.8,1823.7430000000002 M692.5,1828.643 L707.8,1828.643 M699,1823.7430000000002 Q704.5,1825.843 704,1829.143 Q702.5,1833.443 692.5,1833.443 M697.5,1833.143 L707.5,1843.5430000000001" fill="none" stroke="#141414" stroke-width="2.3"/>
<text x="741.85" y="1844.34" font-size="30.6" fill="#141414" textLength="91.24" lengthAdjust="spacingAndGlyphs">21,757</text>
<rect x="829" y="1552" width="42" height="45" fill="#ffffff" opacity="0"/>
<path d="M830.8,1571.7 L869.2,1571.7 M830.8,1577.8 L869.2,1577.8 M850,1561 L850,1571 M850,1578 L850,1588" fill="none" stroke="#fff" stroke-width="5"/>
<rect x="847" y="1571" width="6" height="7" fill="#fff"/>
<path d="M842.8,1561.7 L850,1554.4 L856.9,1561.7 Z M842.8,1587.5 L850,1594.4 L856.9,1587.5 Z" fill="#000" stroke="#fff" stroke-width="1.5"/>
<path d="M830.8,1571.7 L869.2,1571.7 M830.8,1577.8 L869.2,1577.8" fill="none" stroke="#000" stroke-width="2.3"/>
<path d="M850,1561 L850,1571 M850,1578.5 L850,1588" fill="none" stroke="#000" stroke-width="4.4"/>
<path d="M842.8,1561.7 L850,1554.4 L856.9,1561.7 Z M842.8,1587.5 L850,1594.4 L856.9,1587.5 Z" fill="#000" stroke="none" stroke-width="1"/>
<rect x="0" y="1868" width="1080" height="52" fill="#f3f3f3"/>
<line x1="0" y1="1868.5" x2="1080" y2="1868.5" stroke="#cfcfcf" stroke-width="1.2"/>
<path d="M187.5,1920 L187.5,1868.5 L365,1868.5 L365,1920" fill="#fbfbfb" stroke="#cfcfcf" stroke-width="1.2"/>
<rect x="187.5" y="1912" width="178" height="3.5" fill="#217346"/>
<text x="207" y="1902" font-size="30.3" fill="#217346" font-weight="bold" textLength="140" lengthAdjust="spacingAndGlyphs">Rows 10x</text>
<path d="M58,1884 L47,1893 L58,1902 Z" fill="#c6c6c6" stroke="none" stroke-width="1"/>
<path d="M101,1884 L112,1893 L101,1902 Z" fill="#c6c6c6" stroke="none" stroke-width="1"/>
<circle cx="445.5" cy="1894" r="16" fill="none" stroke="#777" stroke-width="2"/>
<path d="M445.5,1885 L445.5,1903 M436.5,1894 L454.5,1894" fill="none" stroke="#555" stroke-width="2.2"/>
</svg>
</body></html>
